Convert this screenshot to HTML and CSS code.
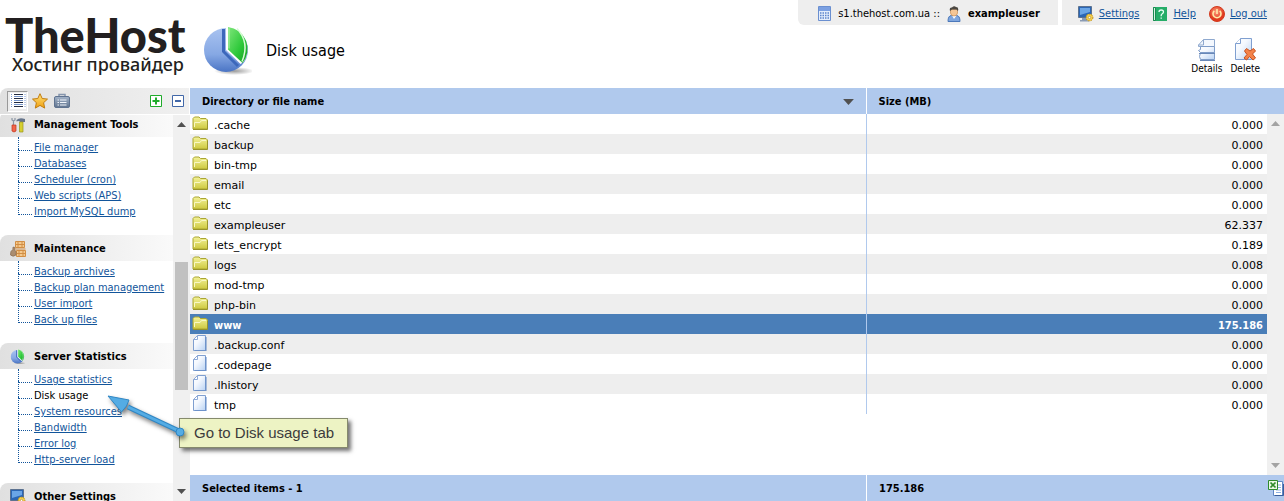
FILE: index.html
```
<!DOCTYPE html>
<html lang="en">
<head>
<meta charset="utf-8">
<title>Disk usage</title>
<link rel="stylesheet" href="styles.css">
</head>
<body>
<svg class="defs" width="0" height="0" aria-hidden="true">
  <defs>
    <linearGradient id="gFolder" x1="0" y1="0" x2="0" y2="1"><stop offset="0" stop-color="#f4f29a"/><stop offset="1" stop-color="#cdc93f"/></linearGradient>
    <linearGradient id="gFile" x1="0" y1="0" x2="1" y2="1"><stop offset="0" stop-color="#fff"/><stop offset=".4" stop-color="#f4f8fe"/><stop offset="1" stop-color="#b9d2f3"/></linearGradient>
    <linearGradient id="gBlue" x1="0" y1="0" x2="0" y2="1"><stop offset="0" stop-color="#a9c3f0"/><stop offset=".6" stop-color="#86a8e4"/><stop offset="1" stop-color="#4a74c4"/></linearGradient>
    <linearGradient id="gGreen" x1="0" y1="0" x2="1" y2="1"><stop offset="0" stop-color="#7fe67a"/><stop offset=".6" stop-color="#2cc839"/><stop offset="1" stop-color="#139a22"/></linearGradient>
    <linearGradient id="gStar" x1="0" y1="0" x2="0" y2="1"><stop offset="0" stop-color="#ffe27a"/><stop offset="1" stop-color="#f0a010"/></linearGradient>
    <linearGradient id="gCase" x1="0" y1="0" x2="0" y2="1"><stop offset="0" stop-color="#a3b3c8"/><stop offset="1" stop-color="#60748f"/></linearGradient>
    <radialGradient id="gPower" cx=".45" cy=".35"><stop offset="0" stop-color="#ff9a7c"/><stop offset="1" stop-color="#e03a1c"/></radialGradient>
    <radialGradient id="gShade"><stop offset="0" stop-color="#000" stop-opacity=".4"/><stop offset="1" stop-color="#000" stop-opacity="0"/></radialGradient>
  </defs>
  <symbol id="folder" viewBox="0 0 16 16">
    <path d="M1 14V3.500L2.500 2H7l1.500 1.500H14L15.500 5v9z" fill="url(#gFolder)" stroke="#aaa632"/>
    <path d="M2.500 12V7.500H8L9.500 5.500H14" fill="none" stroke="#f9f8c4"/>
    <path d="M1 14.500h14.500V6" fill="none" stroke="#98942a"/>
  </symbol>
  <symbol id="file" viewBox="0 0 16 16">
    <path d="M5.500.5h8v15h-12v-11z" fill="url(#gFile)" stroke="#7f9fd0"/>
    <path d="M5.500.5v4h-4z" fill="#fff" stroke="#8fabd8"/>
    <path d="M14 2v14H3" fill="none" stroke="#5f86c4"/>
  </symbol>
  <symbol id="pie" viewBox="0 0 48 52">
    <ellipse cx="30" cy="46" rx="20" ry="4" fill="url(#gShade)"/>
    <circle cx="22" cy="25" r="22" fill="url(#gBlue)"/>
    <path d="M22 2.500v22.500L36.500 39l3-2A22.300 22.300 0 0 0 22 2.500z" fill="#fff"/>
    <path d="M19.500 4v22.500L34 41" fill="none" stroke="#3d68bb" stroke-width="3"/>
    <path d="M24 2v22.500L38.500 38A22 22 0 0 0 24 2z" fill="url(#gGreen)"/>
    <path d="M33 3.500q13 14 5 33" fill="none" stroke="#d8fbd6" stroke-width="1.500"/>
    <path d="M25 3.500v20" stroke="#b6f3b0"/>
  </symbol>
  <symbol id="monitor" viewBox="0 0 16 16">
    <path d="M.5.5h13v11H.5z" fill="#2b66b4" stroke="#5c7290"/>
    <path d="M2 2h10v4L2 9z" fill="#6aa5e6"/>
    <path d="M4 12h5v2h2v1.500H2V14h2z" fill="#8a9bb4"/>
    <circle cx="11.500" cy="11.500" r="3.400" fill="#f7d24a" stroke="#b8861a" stroke-dasharray="1.500 1"/>
    <circle cx="11.500" cy="11.500" r="1.200" fill="#fff" stroke="#a87a18" stroke-width=".6"/>
  </symbol>
  <symbol id="scroll-up" viewBox="0 0 9 5"><path d="M0 5 4.500 0 9 5z" fill="currentColor"/></symbol>
  <symbol id="scroll-down" viewBox="0 0 9 5"><path d="M0 0h9L4.500 5z" fill="currentColor"/></symbol>
</svg>

<div class="app">
  <header class="top">
    <a class="logo" href="#"><span class="logo-name">TheHost</span><span class="logo-sub" lang="ru">Хостинг провайдер</span></a>
    <div class="title">
      <svg class="title-icon"><use href="#pie"/></svg>
      <h1>Disk usage</h1>
    </div>
    <div class="top-right">
      <nav class="userbar">
        <div class="user">
          <svg class="ico" viewBox="0 0 16 16"><path d="M2.500.5h12v14h-12z" fill="#e4edfb" stroke="#6a8fd0"/><path d="M3 1h11v4H3z" fill="#7ba0e2"/><path d="M4 7h9M4 9.500h9M4 12h9" stroke="#5b84cc" stroke-width="1.500" stroke-dasharray="1.500 1"/></svg>
          <span>s1.thehost.com.ua ::</span>
          <svg class="ico" viewBox="0 0 16 16"><path d="M2 15.500q0-6 3.500-6h5q3.500 0 3.500 6z" fill="#7fa6de" stroke="#4c78ba"/><path d="M6 9.500 8 13l2.500-3.500z" fill="#fff"/><path d="M4.500 3.500h7V7q-.5 3-3.500 3T4.500 7z" fill="#f5c695" stroke="#c98c50" stroke-width=".7"/><path d="M4 5Q3 1 6 1.500 8-.5 10 1q3 0 2 4l-1.500-1.500H6z" fill="#4b4742"/></svg>
          <strong>exampleuser</strong>
        </div>
        <div class="links">
          <a href="#"><svg class="ico"><use href="#monitor"/></svg><span>Settings</span></a>
          <a href="#"><svg class="ico" viewBox="0 0 16 16"><path d="M1 1h14v14H1z" fill="#26ad68"/><path d="M1.500 1.500h2v13h-2z" fill="#d4f3e2" stroke="#1b8a50"/><path d="M7 6q0-2 2.200-2 2.300 0 2.300 2 0 1-1.200 1.700T9.200 9.500v.8M9.200 11.500v1.300" fill="none" stroke="#e6fff2" stroke-width="1.300"/></svg><span>Help</span></a>
          <a href="#"><svg class="ico" viewBox="0 0 16 16"><circle cx="8" cy="8" r="7.500" fill="url(#gPower)" stroke="#d23a1e"/><path d="M5.300 4.800a4 4 0 1 0 5.400 0M8 3v5" fill="none" stroke="#ffe9a8" stroke-width="1.600"/></svg><span>Log out</span></a>
        </div>
      </nav>
      <div class="actions">
        <button type="button"><svg class="ico-lg" viewBox="0 0 24 24"><path d="M8.500 1.500h11v7h-16V7z" fill="#f4f8fe" stroke="#8fa9cf"/><path d="M8.500 1.500V7h-5" fill="none" stroke="#8fa9cf"/><path d="M5.500 8.500h14v6h-14l-2-2 2-1zM5.500 14.500h14v7h-14l-1-3z" fill="url(#gFile)" stroke="#7f9cc8"/><path d="M4 15.500h16M5 22.500h15" stroke="#6888b8"/></svg>Details</button>
        <button type="button"><svg class="ico-lg" viewBox="0 0 24 24"><path d="M7.500.5h11v21h-16v-16z" fill="url(#gFile)" stroke="#7f9fd0"/><path d="M7.500.5v5h-5" fill="#fff" stroke="#7f9fd0"/><path d="m11.500 13 2-2.500 3.500 2.500 3.500-2.500 2 2.500-3 3 3 4-2.500 2-3.500-3.500-3 3.500-2.500-2 3-3.500z" fill="#f4834a" stroke="#c9501c"/></svg>Delete</button>
      </div>
    </div>
  </header>

  <aside class="side">
    <div class="side-tools">
      <button type="button" class="tool tool-on" aria-label="Menu"><svg class="ico" viewBox="0 0 16 16"><path d="M0 0h16v16H0z" fill="#fff"/><path d="M4 1.500h9M4 5.500h9M4 9.500h9M4 13.500h9" stroke="#222b40"/><path d="M4 3.500h9M4 7.500h9M4 11.500h9" stroke="#7696cc"/><path d="M1.500 1v14M15 1v14" stroke="#7696cc" stroke-dasharray="1 1"/></svg></button>
      <button type="button" class="tool" aria-label="Favourites"><svg class="ico" viewBox="0 0 16 16"><path d="m8 .7 2.200 4.800 5.300.6-3.900 3.600 1.100 5.400L8 12.400l-4.700 2.700 1.100-5.400L.5 6.100l5.300-.6z" fill="url(#gStar)" stroke="#c07c10"/></svg></button>
      <button type="button" class="tool" aria-label="Clipboard"><svg class="ico" viewBox="0 0 16 16"><path d="M5 4V1.500h6V4" fill="none" stroke="#8595ad" stroke-width="1.500"/><rect x=".5" y="3.500" width="15" height="11" rx="1.500" fill="url(#gCase)" stroke="#5f7390"/><path d="M3.500 7H5M6 7h6.500M3.500 9.500H5M6 9.500h6.500M3.500 12H5M6 12h6.500" stroke="#f1f5fb"/></svg></button>
      <button type="button" class="tool tool-expand" aria-label="Expand all"><svg viewBox="0 0 12 12"><path d="M.5.5h11v11H.5z" fill="#fff" stroke="#1fab2b"/><path d="M2.500 6h7M6 2.500v7" stroke="#1fab2b" stroke-width="2"/></svg></button>
      <button type="button" class="tool tool-collapse" aria-label="Collapse all"><svg viewBox="0 0 12 12"><path d="M.5.5h11v11H.5z" fill="#fff" stroke="#4268a8"/><path d="M3 6h6" stroke="#4268a8" stroke-width="2"/></svg></button>
    </div>
    <div class="side-body">
      <div class="menu">
        <section>
          <h2><svg class="ico" viewBox="0 0 16 16"><path d="M3.500 8V4L2 3V1M3.500 4 5 3V1" fill="none" stroke="#8b96a4" stroke-width="1.200"/><path d="M2 8h4v6q-2 2-4 0z" fill="#f0664a" stroke="#c2341c" stroke-width=".7"/><path d="M6.500 3q3-3 8.500-1v3h-5q-1-1.500-3.500-.5z" fill="#66758c"/><path d="M9.500 5h3.500v10H9.500z" fill="#d6cf30" stroke="#9c951c" stroke-width=".7"/></svg>Management Tools</h2>
          <ul>
            <li><a href="#">File manager</a></li>
            <li><a href="#">Databases</a></li>
            <li><a href="#">Scheduler (cron)</a></li>
            <li><a href="#">Web scripts (APS)</a></li>
            <li><a href="#">Import MySQL dump</a></li>
          </ul>
        </section>
        <section>
          <h2><svg class="ico" viewBox="0 0 16 16"><path d="M5.500.5h9v6h-9zM6.500 9.500h9v6h-9z" fill="#f4c98e" stroke="#d28e44"/><path d="M5 3.500h10M8 1v5M12 1v5M6 12.500h10M9 10v5M13 10v5M4.500 8h11" stroke="#d28e44"/><path d="m3 6 2 .5-.5 2Q7 11 6 14q-3 2.500-5.500 0Q0 10 2.800 8.500z" fill="#ab8d70" stroke="#816449" stroke-width=".6"/></svg>Maintenance</h2>
          <ul>
            <li><a href="#">Backup archives</a></li>
            <li><a href="#">Backup plan management</a></li>
            <li><a href="#">User import</a></li>
            <li><a href="#">Back up files</a></li>
          </ul>
        </section>
        <section>
          <h2><svg class="ico" viewBox="0 0 48 52"><use href="#pie"/></svg>Server Statistics</h2>
          <ul>
            <li><a href="#">Usage statistics</a></li>
            <li><a href="#" class="current" aria-current="page">Disk usage</a></li>
            <li><a href="#">System resources</a></li>
            <li><a href="#">Bandwidth</a></li>
            <li><a href="#">Error log</a></li>
            <li><a href="#">Http-server load</a></li>
          </ul>
        </section>
        <section>
          <h2><svg class="ico"><use href="#monitor"/></svg>Other Settings</h2>
        </section>
      </div>
      <div class="bar bar-side">
        <svg class="arrow"><use href="#scroll-up"/></svg>
        <div class="track"><div class="thumb"></div></div>
        <svg class="arrow"><use href="#scroll-down"/></svg>
      </div>
    </div>
  </aside>

  <main class="content">
    <div class="list">
      <table>
        <thead>
          <tr><th scope="col"><span class="sort">Directory or file name<svg><use href="#scroll-down"/></svg></span></th><th scope="col" class="size">Size (MB)</th></tr>
        </thead>
        <tbody>
          <tr><td><svg class="ico"><use href="#folder"/></svg>.cache</td><td>0.000</td></tr>
          <tr><td><svg class="ico"><use href="#folder"/></svg>backup</td><td>0.000</td></tr>
          <tr><td><svg class="ico"><use href="#folder"/></svg>bin-tmp</td><td>0.000</td></tr>
          <tr><td><svg class="ico"><use href="#folder"/></svg>email</td><td>0.000</td></tr>
          <tr><td><svg class="ico"><use href="#folder"/></svg>etc</td><td>0.000</td></tr>
          <tr><td><svg class="ico"><use href="#folder"/></svg>exampleuser</td><td>62.337</td></tr>
          <tr><td><svg class="ico"><use href="#folder"/></svg>lets_encrypt</td><td>0.189</td></tr>
          <tr><td><svg class="ico"><use href="#folder"/></svg>logs</td><td>0.008</td></tr>
          <tr><td><svg class="ico"><use href="#folder"/></svg>mod-tmp</td><td>0.000</td></tr>
          <tr><td><svg class="ico"><use href="#folder"/></svg>php-bin</td><td>0.000</td></tr>
          <tr class="selected"><td><svg class="ico"><use href="#folder"/></svg>www</td><td>175.186</td></tr>
          <tr><td><svg class="ico"><use href="#file"/></svg>.backup.conf</td><td>0.000</td></tr>
          <tr><td><svg class="ico"><use href="#file"/></svg>.codepage</td><td>0.000</td></tr>
          <tr><td><svg class="ico"><use href="#file"/></svg>.lhistory</td><td>0.000</td></tr>
          <tr><td><svg class="ico"><use href="#file"/></svg>tmp</td><td>0.000</td></tr>
        </tbody>
      </table>
      <div class="bar bar-list">
        <svg class="arrow"><use href="#scroll-up"/></svg>
        <div class="track"></div>
        <svg class="arrow"><use href="#scroll-down"/></svg>
      </div>
    </div>
    <footer class="totals">
      <span class="selected-count">Selected items - 1</span>
      <span class="total">175.186</span>
      <button type="button" aria-label="Export"><svg class="ico" viewBox="0 0 16 16"><path d="M7.500 1.500h7v14h-9v-6" fill="#fff" stroke="#5f86c4"/><path d="M9 5h4M9 7.500h4M8 10h5M8 12.500h5" stroke="#8fb0e2"/><path d="M15.500 4v11.500H7" fill="none" stroke="#3a5f9c"/><path d="M.5.5h9v9h-9z" fill="#e9f7e4" stroke="#2f8a2a"/><path d="m2.500 2.500 5 5M7.500 2.500l-5 5" stroke="#2f8a2a" stroke-width="1.700"/></svg></button>
    </footer>
  </main>

  <div class="hint">
    Go to Disk usage tab
    <svg class="pointer" viewBox="0 0 80 50"><path d="M73 38 22 14" stroke="#2f86c4" stroke-width="5"/><path d="M73 38 22 14" stroke="#54ace4" stroke-width="3"/><path d="M2 3 23 7l-2.500 6-5 6z" fill="#54ace4" stroke="#2f86c4"/><circle cx="74" cy="39" r="4" fill="#54ace4" stroke="#2f86c4"/></svg>
  </div>
</div>
</body>
</html>
```
FILE: styles.css
```
* { box-sizing: border-box; }

body {
  margin: 0;
  background: #fff;
  color: #000;
  font: 11px/16px "DejaVu Sans Condensed", "DejaVu Sans", sans-serif;
}

.defs { position: absolute; }

button {
  padding: 0;
  border: 0;
  background: none;
  color: inherit;
  font: inherit;
}

svg { display: block; flex: none; }
a { color: #12559b; }
h1, h2, ul { margin: 0; padding: 0; font: inherit; }
ul { list-style: none; }

.ico { width: 16px; height: 16px; }
.ico-lg { width: 24px; height: 24px; }

.app {
  position: relative;
  display: grid;
  grid-template: 88px minmax(0, 1fr) / 190px minmax(0, 1fr);
  height: 100vh;
  overflow: hidden;
}

/* Header */
.top {
  grid-column: 1 / -1;
  display: flex;
}

.logo {
  display: flex;
  flex-direction: column;
  width: 204px;
  padding: 14px 0 0 5px;
  color: #231f20;
  text-decoration: none;
  white-space: nowrap;
}
.logo-name { font: 900 47px/43px Lato, sans-serif; }
.logo-sub {
  padding-left: 7px;
  font: 500 18px/14px "Noto Sans", sans-serif;
}

.title {
  display: flex;
  align-items: center;
  gap: 14px;
  padding-top: 14px;
}
.title-icon { width: 48px; height: 52px; }
.title h1 { font-size: 16px; line-height: 20px; }

.top-right {
  display: flex;
  flex-direction: column;
  align-items: flex-end;
  margin-left: auto;
}
.userbar { display: flex; gap: 4px; }
.user, .links {
  display: flex;
  align-items: center;
  height: 25px;
  padding-top: 2px;
  background: #eee;
}
.user {
  gap: 6px;
  padding: 2px 18px 0 18px;
  border-bottom-left-radius: 6px;
}
.links { gap: 13px; padding-left: 16px; padding-right: 17px; }
.links a { display: flex; gap: 5px; text-decoration: none; }
.links span { text-decoration: underline; }

.actions {
  display: flex;
  gap: 8px;
  padding: 13px 24px 0 0;
}
.actions button {
  display: flex;
  flex-direction: column;
  align-items: center;
  font-size: 10px;
  line-height: 14px;
}

/* Side menu */
.side {
  display: flex;
  flex-direction: column;
  min-height: 0;
}
.side-tools {
  display: flex;
  align-items: center;
  height: 26px;
  padding: 0 7px;
  gap: 6px;
  margin-right: 1px;
  border-top-left-radius: 8px;
  background: linear-gradient(90deg, #e0e0e0, #f0f0f0);
}
.tool svg { margin: auto; }
.tool-on {
  width: 21px;
  height: 21px;
  margin-right: -2px;
  border: 1px solid #999;
  border-right-color: #fff;
  border-bottom-color: #fff;
  background: #ececec;
}
.tool-expand { margin-left: auto; }
.tool-expand svg, .tool-collapse svg { width: 12px; height: 12px; }
.tool-collapse { margin-left: 4px; margin-right: -2px; }

.side-body {
  display: flex;
  flex: 1;
  min-height: 0;
  padding-top: 1px;
}
.menu { flex: 1; overflow: hidden; }
.menu section { padding-bottom: 16px; }
.menu section:first-child { margin-top: -4px; }
.menu h2 {
  display: flex;
  align-items: center;
  gap: 8px;
  height: 26px;
  padding: 2px 0 0 10px;
  border-top-left-radius: 8px;
  background: linear-gradient(90deg, #e0e0e0, #fafafa);
  font-weight: bold;
}
.menu ul { padding: 2px 0 0 18px; }
.menu li {
  position: relative;
  height: 16px;
  padding: 1px 0 0 16px;
  white-space: nowrap;
}
.menu li::before {
  content: "";
  position: absolute;
  left: 0;
  top: -6px;
  width: 13px;
  height: 17px;
  border: 0 dotted #12559b;
  border-left-width: 1px;
  border-bottom-width: 1px;
}
.menu li:first-child::before { top: -2px; height: 13px; }
.menu .current { color: #000; text-decoration: none; }

/* Scroll bars */
.bar {
  display: flex;
  flex-direction: column;
  align-items: center;
  width: 17px;
  padding: 7px 0;
  background: #f0f0f0;
}
.arrow { width: 9px; height: 5px; color: #505050; }
.track { flex: 1; }
.bar-side .track {
  display: grid;
  grid-template-rows: 134fr 128fr 98fr;
}
.thumb { grid-row: 2; width: 13px; background: #c1c1c1; }
.bar-list {
  position: absolute;
  top: 26px;
  right: 0;
  bottom: 0;
}
.bar-list .arrow { color: #a3a3a3; }

/* File list */
.content {
  display: flex;
  flex-direction: column;
  min-width: 0;
  min-height: 0;
}
.list {
  position: relative;
  flex: 1;
  min-height: 0;
  overflow: hidden;
}
table {
  width: 100%;
  table-layout: fixed;
  border-collapse: collapse;
}
th {
  height: 26px;
  padding: 2px 12px 0;
  background: #b0c9ed;
  text-align: left;
}
.size { width: 418px; border-left: 1px solid #fff; }
.sort {
  display: flex;
  align-items: center;
  justify-content: space-between;
}
.sort svg { width: 11px; height: 6px; color: #505050; }
td {
  height: 20px;
  padding: 4px 21px 0 2px;
  font-family: "DejaVu Sans", sans-serif;
}
td .ico { float: left; margin: -3px 6px 0 0; }
td + td {
  border-left: 1px solid #b0c9ed;
  text-align: right;
}
tbody tr:nth-child(even) { background: #eee; }
tbody .selected { background: #4a7eb8; }
.selected td {
  color: #fff;
  font-family: "DejaVu Sans Condensed", "DejaVu Sans", sans-serif;
  font-weight: bold;
}

.totals {
  display: flex;
  align-items: center;
  height: 26px;
  background: #b0c9ed;
  font-weight: bold;
  line-height: 26px;
}
.selected-count { flex: 1; padding: 1px 0 0 12px; }
.total {
  width: 402px;
  padding: 1px 0 0 12px;
  border-left: 1px solid #fff;
}

/* Callout */
.hint {
  position: absolute;
  left: 179px;
  top: 418px;
  padding: 0 13px 0 14px;
  border: 1px solid #858a6c;
  background: #edf3c4;
  box-shadow: 3px 3px 4px rgba(0, 0, 0, .55);
  color: #3c3c3c;
  font: 15px/28px "Liberation Sans", Arial, sans-serif;
  white-space: nowrap;
}
.pointer {
  position: absolute;
  left: -74px;
  top: -26px;
  width: 80px;
  height: 50px;
  overflow: visible;
  filter: drop-shadow(2px 3px 2px rgba(0, 0, 0, .5));
}
```
